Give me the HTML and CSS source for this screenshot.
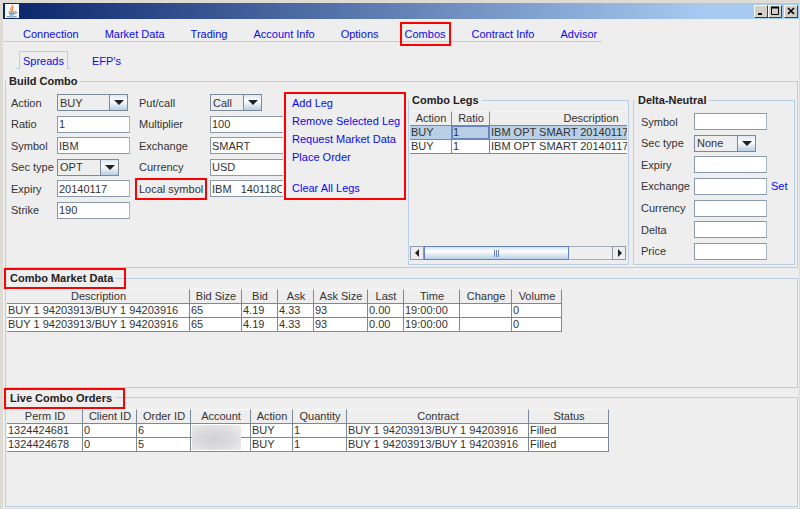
FILE: index.html
```html
<!DOCTYPE html>
<html lang="en">
<head>
<meta charset="utf-8">
<title>Combos</title>
<link rel="stylesheet" href="styles.css">
</head>
<body>
<div class="window">
  <header class="titlebar">
    <svg class="app-icon" viewBox="0 0 14 14" aria-hidden="true">
      <rect width="14" height="14" fill="#f4f6f8"/>
      <path d="M7.6 1C8.6 2.6 5 3.4 5.6 5.2c.2.8 1 1.300 1 1.800M8.800 3.200C7.200 4 6.800 4.800 7.500 5.600c.4.5 0 1 -.3 1.300" fill="none" stroke="#e8863a" stroke-width="1.100"/>
      <path d="M3.500 8h6.500M4 9.600h5.400M4.600 11h4M10 8c2.400-.6 2 1.700-.4 2.200M2 12.400c2.500.8 7 .8 9.600-.1" fill="none" stroke="#5f7f9f" stroke-width="1"/>
    </svg>
    <div class="controls">
      <button type="button" aria-label="Minimize"><svg viewBox="0 0 10 10"><path d="M2 8h4" stroke="#000" stroke-width="2"/></svg></button>
      <button type="button" aria-label="Maximize"><svg viewBox="0 0 10 10"><path d="M1.500 1v7.500h7V1" fill="none" stroke="#000" stroke-width="1"/><path d="M1 1.500h8" stroke="#000" stroke-width="2"/></svg></button>
      <button type="button" class="close" aria-label="Close"><svg viewBox="0 0 10 10"><path d="M2 2l6 6M8 2l-6 6" stroke="#000" stroke-width="1.600"/></svg></button>
    </div>
  </header>

  <nav class="tabs">
    <a href="#">Connection</a>
    <a href="#">Market Data</a>
    <a href="#">Trading</a>
    <a href="#">Account Info</a>
    <a href="#">Options</a>
    <a href="#" class="marked">Combos</a>
    <a href="#">Contract Info</a>
    <a href="#">Advisor</a>
  </nav>
  <nav class="subtabs">
    <a href="#" class="current">Spreads</a>
    <a href="#">EFP's</a>
  </nav>

  <main class="panels">
    <fieldset class="build">
      <legend>Build Combo</legend>
      <div class="build-row">
        <div class="form contract-left">
          <label for="action">Action</label>
          <span class="combo wide"><select id="action"><option>BUY</option><option>SELL</option></select></span>
          <label for="ratio">Ratio</label><input id="ratio" type="text" value="1">
          <label for="symbol">Symbol</label><input id="symbol" type="text" value="IBM">
          <label for="sectype">Sec type</label>
          <span class="combo medium"><select id="sectype"><option>OPT</option></select></span>
          <label for="expiry">Expiry</label><input id="expiry" type="text" value="20140117">
          <label for="strike">Strike</label><input id="strike" type="text" value="190">
        </div>
        <div class="form contract-right">
          <label for="putcall">Put/call</label>
          <span class="combo narrow"><select id="putcall"><option>Call</option><option>Put</option></select></span>
          <label for="multiplier">Multiplier</label><input id="multiplier" type="text" value="100">
          <label for="exchange">Exchange</label><input id="exchange" type="text" value="SMART">
          <label for="currency">Currency</label><input id="currency" type="text" value="USD">
          <label for="local" class="marked-label">Local symbol</label><input id="local" type="text" value="IBM   140118C">
        </div>
        <div class="actions">
          <a href="#">Add Leg</a>
          <a href="#">Remove Selected Leg</a>
          <a href="#">Request Market Data</a>
          <a href="#">Place Order</a>
          <a href="#" class="apart">Clear All Legs</a>
        </div>
        <fieldset class="legs">
          <legend>Combo Legs</legend>
          <div class="legs-body">
            <div class="viewport">
              <table class="legs-table">
                <colgroup><col class="w42"><col class="w38"><col class="w202"></colgroup>
                <thead><tr><th>Action</th><th>Ratio</th><th>Description</th></tr></thead>
                <tbody>
                  <tr class="selected"><td>BUY</td><td class="focus">1</td><td>IBM OPT SMART 20140117</td></tr>
                  <tr><td>BUY</td><td>1</td><td>IBM OPT SMART 20140117</td></tr>
                </tbody>
              </table>
            </div>
            <div class="scrollbar">
              <button type="button" aria-label="Scroll left"><svg viewBox="0 0 12 12"><path d="M8 2v8L4 6z" fill="#222"/></svg></button>
              <div class="track"><div class="thumb"></div></div>
              <button type="button" aria-label="Scroll right"><svg viewBox="0 0 12 12"><path d="M5 2v8l4-4z" fill="#222"/></svg></button>
            </div>
          </div>
        </fieldset>
        <fieldset class="delta">
          <legend>Delta-Neutral</legend>
          <div class="form delta-form">
            <label for="d-symbol">Symbol</label><input id="d-symbol" type="text">
            <label for="d-sectype">Sec type</label>
            <span class="combo medium"><select id="d-sectype"><option>None</option></select></span>
            <label for="d-expiry">Expiry</label><input id="d-expiry" type="text">
            <label for="d-exchange">Exchange</label><input id="d-exchange" type="text"><a href="#">Set</a>
            <label for="d-currency">Currency</label><input id="d-currency" type="text">
            <label for="d-delta">Delta</label><input id="d-delta" type="text">
            <label for="d-price">Price</label><input id="d-price" type="text">
          </div>
        </fieldset>
      </div>
    </fieldset>

    <fieldset class="list">
      <legend class="marked-legend">Combo Market Data</legend>
      <table class="market">
        <colgroup><col class="w183"><col class="w52"><col class="w36"><col class="w36"><col class="w54"><col class="w36"><col class="w56"><col class="w52"><col class="w50"></colgroup>
        <thead><tr><th>Description</th><th>Bid Size</th><th>Bid</th><th>Ask</th><th>Ask Size</th><th>Last</th><th>Time</th><th>Change</th><th>Volume</th></tr></thead>
        <tbody>
          <tr><td>BUY 1 94203913/BUY 1 94203916</td><td>65</td><td>4.19</td><td>4.33</td><td>93</td><td>0.00</td><td>19:00:00</td><td></td><td>0</td></tr>
          <tr><td>BUY 1 94203913/BUY 1 94203916</td><td>65</td><td>4.19</td><td>4.33</td><td>93</td><td>0.00</td><td>19:00:00</td><td></td><td>0</td></tr>
        </tbody>
      </table>
    </fieldset>

    <fieldset class="list">
      <legend class="marked-legend">Live Combo Orders</legend>
      <table class="orders">
        <colgroup><col class="w76"><col class="w54"><col class="w54"><col class="w60"><col class="w42"><col class="w54"><col class="w182"><col class="w80"></colgroup>
        <thead><tr><th>Perm ID</th><th>Client ID</th><th>Order ID</th><th>Account</th><th>Action</th><th>Quantity</th><th>Contract</th><th>Status</th></tr></thead>
        <tbody>
          <tr><td>1324424681</td><td>0</td><td>6</td><td class="account"><span class="redacted"></span></td><td>BUY</td><td>1</td><td>BUY 1 94203913/BUY 1 94203916</td><td>Filled</td></tr>
          <tr><td>1324424678</td><td>0</td><td>5</td><td></td><td>BUY</td><td>1</td><td>BUY 1 94203913/BUY 1 94203916</td><td>Filled</td></tr>
        </tbody>
      </table>
    </fieldset>
  </main>
</div>
</body>
</html>
```
FILE: styles.css
```css
* { box-sizing: border-box; }

body {
  margin: 0;
  font: 11px/14px "Liberation Sans", Arial, sans-serif;
  color: #333;
  background: #eee;
}

input, select, button { font: inherit; color: inherit; margin: 0; }
a { color: #0a0aee; text-decoration: none; white-space: nowrap; }

.window {
  display: flex;
  flex-direction: column;
  min-height: 100vh;
  border-top: 3px solid #dedbd5;
  border-left: 3px solid #dedbd5;
  border-right: 1px solid #dedbd5;
  border-bottom: 1px solid #dedbd5;
}

/* Title bar */
.titlebar {
  display: flex;
  align-items: center;
  justify-content: space-between;
  height: 16px;
  padding: 0 1px 0 2px;
  background: linear-gradient(90deg, #0a246a, #a6caf0 88%);
}
.app-icon { width: 14px; height: 14px; }
.controls { display: flex; }
.controls button {
  display: flex;
  align-items: center;
  justify-content: center;
  width: 14px;
  height: 13px;
  padding: 0;
  border: 1px solid;
  border-color: #fff #404040 #404040 #fff;
  background: #d4d0c8;
}
.controls .close { margin-left: 2px; }
.controls svg { width: 10px; height: 10px; }

/* Tabs */
.tabs {
  display: flex;
  align-items: center;
  gap: 26px;
  align-self: flex-start;
  height: 23px;
  padding: 7px 5px 0 20px;
  border-bottom: 1px solid #b8cfe5;
}
.marked { outline: 2px solid #f00; outline-offset: 3px; }
.subtabs {
  display: flex;
  gap: 20px;
  padding: 9px 16px 5px;
}
.subtabs a { padding: 3px 4px 1px; }
.subtabs .current {
  position: relative;
  padding: 2px 3px 0;
  border: 1px solid #b8cfe5;
  border-bottom: 0;
}
.subtabs .current::before,
.subtabs .current::after {
  content: "";
  position: absolute;
  bottom: 0;
  width: 4px;
  height: 1px;
  background: #b8cfe5;
}
.subtabs .current::before { right: 100%; }
.subtabs .current::after { left: 100%; }

/* Group boxes */
fieldset {
  min-width: 0;
  margin: 0;
  padding: 0;
  border: 1px solid #b8cfe5;
}
legend {
  position: relative;
  padding: 0 3px;
  font-weight: bold;
  color: #222;
}
.marked-legend::after {
  content: "";
  position: absolute;
  inset: -3px -10px -4px -3px;
  border: 2px solid #f00;
}
.panels {
  flex: 1;
  display: flex;
  flex-direction: column;
  gap: 3px;
  padding: 0 1px 1px 2px;
}
.build { padding: 4px 2px 2px 5px; }
.build > legend { margin-left: -5px; }
.list { flex: 1; padding: 4px 1px 3px; }
.build-row { display: flex; align-items: flex-start; }

/* Forms */
.form {
  display: grid;
  grid-auto-rows: 1fr;
  align-items: center;
}
.contract-left { grid-template-columns: 46px 73px; min-height: 129px; }
.contract-right {
  grid-template-columns: 71px 73px;
  grid-template-rows: repeat(6, 1fr);
  min-height: 129px;
  margin-left: 9px;
}
.form label { white-space: nowrap; justify-self: start; }
.marked-label { outline: 2px solid #f00; outline-offset: 2px; }

input {
  width: 100%;
  height: 17px;
  padding: 0 1px;
  border: 1px solid #8a9aaa;
  border-right-color: #a8b4c2;
  border-radius: 0;
  background: #fff;
}
.contract-right input { border-right: 0; }

.combo { position: relative; }
.combo.wide { width: 71px; }
.combo.medium { width: 62px; }
.combo.narrow { width: 52px; }
select {
  appearance: none;
  display: block;
  width: 100%;
  height: 17px;
  padding: 0 18px 0 2px;
  border: 1px solid #7a8a99;
  border-radius: 0;
  background: #eee;
}
.combo::before {
  content: "";
  position: absolute;
  top: 1px;
  right: 1px;
  bottom: 1px;
  width: 17px;
  border-left: 1px solid #7a8a99;
  background: linear-gradient(#dde8f3, #fff 40%, #b8cfe5);
  pointer-events: none;
}
.combo::after {
  content: "";
  position: absolute;
  top: 6px;
  right: 4px;
  border: 5px solid transparent;
  border-top-color: #222;
  border-bottom: 0;
  pointer-events: none;
}

.actions {
  display: flex;
  flex-direction: column;
  width: 122px;
  height: 108px;
  margin-left: 1px;
  padding-left: 6px;
  border: 2px solid #f00;
  line-height: 18px;
}
.actions .apart { margin-top: 13px; }

/* Combo legs */
.legs { flex: 1; margin: 1px 0 0 2px; align-self: stretch; }
.legs-body {
  display: flex;
  flex-direction: column;
  justify-content: space-between;
  height: 100%;
  padding: 4px 1px 4px;
}
.viewport { overflow: hidden; }
.scrollbar { display: flex; height: 14px; margin-right: 1px; }
.scrollbar button {
  width: 14px;
  padding: 0;
  border: 1px solid #8a9aaa;
  background: #eee;
}
.scrollbar svg { display: block; width: 12px; height: 12px; }
.track {
  flex: 1;
  border: solid #a3b1bf;
  border-width: 1px 0;
}
.thumb {
  width: 77%;
  height: 12px;
  border: solid #6382bf;
  border-width: 0 1px;
  background:
    repeating-linear-gradient(90deg, #6382bf 0 1px, transparent 1px 2px) center / 5px 7px no-repeat,
    linear-gradient(#d3e2f2, #fff 35%, #b8cfe5);
  box-shadow: 0 -1px #6382bf, 0 1px #6382bf;
}

/* Delta-neutral */
.delta { width: 162px; margin: 1px 0 0 4px; padding: 4px 3px 2px 7px; }
.delta > legend { margin-left: -6px; }
.delta-form { grid-template-columns: 53px 73px 1fr; min-height: 151px; }
.delta-form label { grid-column: 1; }
.delta-form a { padding-left: 4px; }

/* Tables */
table { border-collapse: separate; border-spacing: 0; table-layout: fixed; }
th, td {
  overflow: hidden;
  height: 14px;
  padding: 0 0 0 1px;
  border-right: 1px solid #7a8a99;
  border-bottom: 1px solid #7a8a99;
  line-height: 13px;
  text-align: left;
  white-space: nowrap;
}
th {
  height: 15px;
  border-top: 1px solid #f8f8f8;
  font-weight: normal;
  text-align: center;
}
td { background: #fff; }
.market { width: 555px; }
.orders { width: 602px; }
.legs-table { width: 282px; }
.selected td { background: #b8cfe5; }
.selected .focus { box-shadow: inset 0 0 0 1px #6382bf; }

.account { position: relative; overflow: visible; }
.redacted {
  position: absolute;
  top: 1px;
  left: 1px;
  width: 49px;
  height: 25px;
  background: radial-gradient(ellipse at 45% 55%, #d2d2d4, #dcdcde 50%, #f0f0f0);
  z-index: 1;
}

.w36 { width: 36px; }
.w38 { width: 38px; }
.w42 { width: 42px; }
.w50 { width: 50px; }
.w52 { width: 52px; }
.w54 { width: 54px; }
.w56 { width: 56px; }
.w60 { width: 60px; }
.w76 { width: 76px; }
.w80 { width: 80px; }
.w182 { width: 182px; }
.w183 { width: 183px; }
.w202 { width: 202px; }
```
